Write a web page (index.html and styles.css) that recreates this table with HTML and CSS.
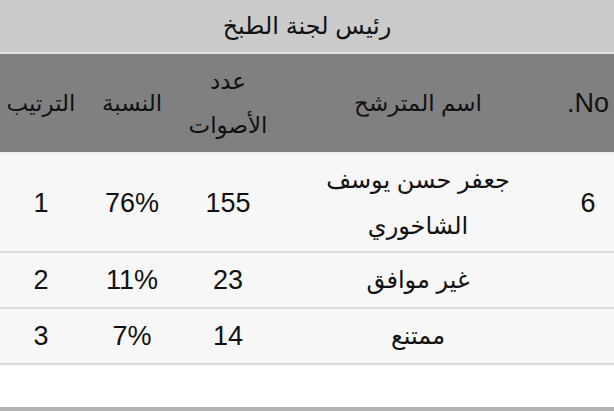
FILE: index.html
```html
<!DOCTYPE html>
<html lang="ar" dir="rtl">
<head>
<meta charset="utf-8">
<link rel="stylesheet" href="styles.css">
</head>
<body>
<div class="page">
  <div class="title">رئيس لجنة الطبخ</div>
  <div class="table">
    <div class="row head">
      <div class="cell">No.</div>
      <div class="cell ar">اسم المترشح</div>
      <div class="cell ar tall">عدد<br>الأصوات</div>
      <div class="cell ar">النسبة</div>
      <div class="cell ar">الترتيب</div>
    </div>
    <div class="row r1">
      <div class="cell">6</div>
      <div class="cell ar tall">جعفر حسن يوسف<br>الشاخوري</div>
      <div class="cell">155</div>
      <div class="cell">76%</div>
      <div class="cell">1</div>
    </div>
    <div class="row r2">
      <div class="cell"></div>
      <div class="cell ar">غير موافق</div>
      <div class="cell">23</div>
      <div class="cell">11%</div>
      <div class="cell">2</div>
    </div>
    <div class="row r3">
      <div class="cell"></div>
      <div class="cell ar">ممتنع</div>
      <div class="cell">14</div>
      <div class="cell">7%</div>
      <div class="cell">3</div>
    </div>
  </div>
  <div class="spacer"></div>
  <div class="bottom"></div>
</div>
</body>
</html>
```

FILE: styles.css
```css
html, body {
  margin: 0;
  padding: 0;
  background: #ffffff;
}
body {
  width: 614px;
  height: 411px;
  overflow: hidden;
  font-family: "Liberation Sans", "DejaVu Sans", sans-serif;
  color: #111111;
}
.page {
  display: flex;
  flex-direction: column;
  height: 411px;
}
.title {
  height: 52px;
  background: #cbcbcb;
  border-bottom: 2px solid #e2e2e2;
  display: flex;
  align-items: center;
  justify-content: center;
  font-size: 24px;
  line-height: 1;
}
.table {
  display: flex;
  flex-direction: column;
}
.row {
  display: grid;
  grid-template-columns: 52px 288px 92px 100px 82px;
  background: #f7f7f7;
  border-bottom: 2px solid #dcdcdc;
}
.row.head {
  background: #808080;
  height: 98px;
  border-bottom: 2px solid #eeeeee;
}
.row.r1 { height: 97px; }
.row.r2 { height: 54px; }
.row.r3 { height: 54px; }
.cell {
  display: flex;
  align-items: center;
  justify-content: center;
  text-align: center;
  font-size: 27px;
  line-height: 42px;
}
.cell.ar {
  font-size: 24px;
}
.head .cell.ar {
  font-size: 23px;
}
.cell.tall {
  line-height: 46px;
}
.head .cell.tall {
  line-height: 44px;
}
.spacer {
  flex: 1;
  background: #ffffff;
}
.bottom {
  height: 4px;
  background: #b3b3b3;
}
```
